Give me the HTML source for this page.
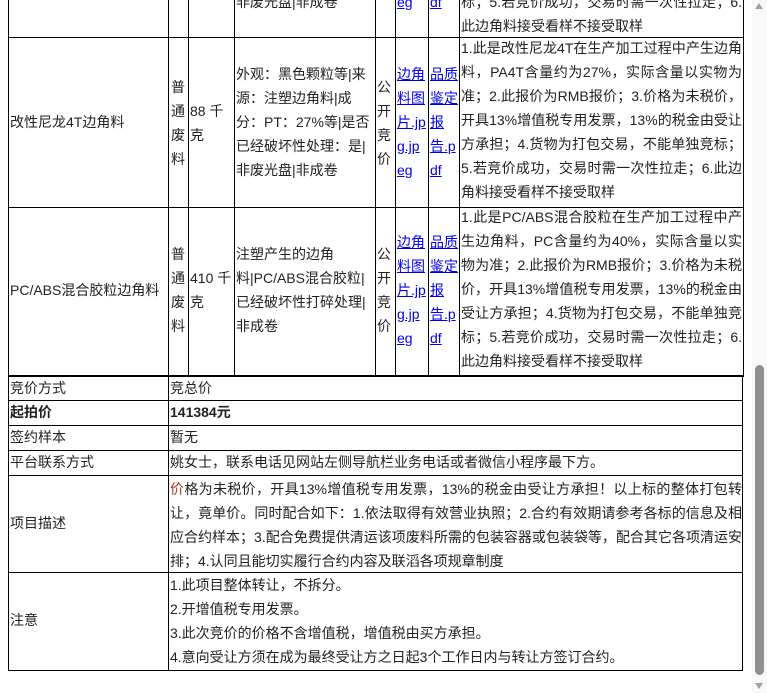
<!DOCTYPE html>
<html><head><meta charset="utf-8"><style>
html,body{margin:0;padding:0;background:#fff;}
body{width:767px;height:693px;position:relative;overflow:hidden;font-family:"Liberation Sans","Noto Sans CJK SC",sans-serif;font-size:14px;color:#222;}
.v{position:absolute;width:1px;background:#000;}
.h{position:absolute;height:1px;background:#000;}
.t{position:absolute;line-height:24px;white-space:nowrap;}
.a{color:#0000ee;text-decoration:underline;}
.blk{position:absolute;line-height:24px;}
.blk span{display:block;white-space:nowrap;}
.blk span.j{text-align:justify;text-align-last:justify;}
</style></head><body>
<!-- upper table verticals -->
<div class="v" style="left:8px;top:0;height:376px"></div>
<div class="v" style="left:168px;top:0;height:376px"></div>
<div class="v" style="left:188px;top:0;height:376px"></div>
<div class="v" style="left:234px;top:0;height:376px"></div>
<div class="v" style="left:375px;top:0;height:376px"></div>
<div class="v" style="left:395px;top:0;height:376px"></div>
<div class="v" style="left:428px;top:0;height:376px"></div>
<div class="v" style="left:459px;top:0;height:376px"></div>
<div class="v" style="left:743px;top:0;height:376px"></div>
<div class="h" style="left:8px;top:37px;width:736px"></div>
<div class="h" style="left:8px;top:207px;width:736px"></div>
<div class="h" style="left:8px;top:375px;width:736px;height:2px"></div>
<!-- lower table -->
<div class="v" style="left:8px;top:376px;height:295px"></div>
<div class="v" style="left:168px;top:376px;height:295px"></div>
<div class="v" style="left:742px;top:376px;height:295px"></div>
<div class="h" style="left:8px;top:400px;width:735px"></div>
<div class="h" style="left:8px;top:425px;width:735px"></div>
<div class="h" style="left:8px;top:450px;width:735px"></div>
<div class="h" style="left:8px;top:475px;width:735px"></div>
<div class="h" style="left:8px;top:572px;width:735px"></div>
<div class="h" style="left:8px;top:670px;width:735px"></div>

<!-- row 1 partial -->
<div class="t" style="left:236px;top:-10px">非废光盘|非成卷</div>
<div class="t a" style="left:397px;top:-10px">eg</div>
<div class="t a" style="left:430px;top:-10px">df</div>
<div class="blk" style="left:461px;top:-10px;width:281px"><span class="j">标；5.若竞价成功，交易时需一次性拉走；6.</span><span>此边角料接受看样不接受取样</span></div>

<!-- row 2 -->
<div class="t" style="left:10px;top:110px">改性尼龙4T边角料</div>
<div class="blk" style="left:171px;top:75px"><span>普</span><span>通</span><span>废</span><span>料</span></div>
<div class="blk" style="left:190px;top:99px"><span>88 千</span><span>克</span></div>
<div class="blk" style="left:236px;top:62px"><span>外观：黑色颗粒等|来</span><span>源：注塑边角料|成</span><span>分：PT：27%等|是否</span><span>已经破坏性处理：是|</span><span>非废光盘|非成卷</span></div>
<div class="blk" style="left:377px;top:75px"><span>公</span><span>开</span><span>竞</span><span>价</span></div>
<div class="blk a" style="left:397px;top:62px"><span>边角</span><span>料图</span><span>片.jp</span><span>g.jp</span><span>eg</span></div>
<div class="blk a" style="left:430px;top:62px"><span>品质</span><span>鉴定</span><span>报</span><span>告.p</span><span>df</span></div>
<div class="blk" style="left:461px;top:36px;width:281px"><span class="j">1.此是改性尼龙4T在生产加工过程中产生边角</span><span class="j">料，PA4T含量约为27%，实际含量以实物为</span><span class="j">准；2.此报价为RMB报价；3.价格为未税价，</span><span class="j">开具13%增值税专用发票，13%的税金由受让</span><span class="j">方承担；4.货物为打包交易，不能单独竞标；</span><span class="j">5.若竞价成功，交易时需一次性拉走；6.此边</span><span>角料接受看样不接受取样</span></div>

<!-- row 3 -->
<div class="t" style="left:10px;top:278px">PC/ABS混合胶粒边角料</div>
<div class="blk" style="left:171px;top:242px"><span>普</span><span>通</span><span>废</span><span>料</span></div>
<div class="blk" style="left:190px;top:266px"><span>410 千</span><span>克</span></div>
<div class="blk" style="left:236px;top:242px"><span>注塑产生的边角</span><span>料|PC/ABS混合胶粒|</span><span>已经破坏性打碎处理|</span><span>非成卷</span></div>
<div class="blk" style="left:377px;top:242px"><span>公</span><span>开</span><span>竞</span><span>价</span></div>
<div class="blk a" style="left:397px;top:230px"><span>边角</span><span>料图</span><span>片.jp</span><span>g.jp</span><span>eg</span></div>
<div class="blk a" style="left:430px;top:230px"><span>品质</span><span>鉴定</span><span>报</span><span>告.p</span><span>df</span></div>
<div class="blk" style="left:461px;top:205px;width:281px"><span class="j">1.此是PC/ABS混合胶粒在生产加工过程中产</span><span class="j">生边角料，PC含量约为40%，实际含量以实</span><span class="j">物为准；2.此报价为RMB报价；3.价格为未税</span><span class="j">价，开具13%增值税专用发票，13%的税金由</span><span class="j">受让方承担；4.货物为打包交易，不能单独竞</span><span class="j">标；5.若竞价成功，交易时需一次性拉走；6.</span><span>此边角料接受看样不接受取样</span></div>

<!-- lower rows -->
<div class="t" style="left:10px;top:376px">竞价方式</div>
<div class="t" style="left:170px;top:376px">竞总价</div>
<div class="t" style="left:10px;top:400px;font-weight:bold">起拍价</div>
<div class="t" style="left:170px;top:400px;font-weight:bold">141384元</div>
<div class="t" style="left:10px;top:425px">签约样本</div>
<div class="t" style="left:170px;top:425px">暂无</div>
<div class="t" style="left:10px;top:450px">平台联系方式</div>
<div class="t" style="left:170px;top:450px">姚女士，联系电话见网站左侧导航栏业务电话或者微信小程序最下方。</div>
<div class="t" style="left:10px;top:511px">项目描述</div>
<div class="blk" style="left:170px;top:477px;width:572px"><span class="j"><span style="display:inline;color:#b03020">价</span>格为未税价，开具13%增值税专用发票，13%的税金由受让方承担！以上标的整体打包转</span><span class="j">让，竟单价。同时配合如下：1.依法取得有效营业执照；2.合约有效期请参考各标的信息及相</span><span class="j">应合约样本；3.配合免费提供清运该项废料所需的包装容器或包装袋等，配合其它各项清运安</span><span>排；4.认同且能切实履行合约内容及联滔各项规章制度</span></div>
<div class="t" style="left:10px;top:608px">注意</div>
<div class="blk" style="left:170px;top:573px"><span>1.此项目整体转让，不拆分。</span><span>2.开增值税专用发票。</span><span>3.此次竞价的价格不含增值税，增值税由买方承担。</span><span>4.意向受让方须在成为最终受让方之日起3个工作日内与转让方签订合约。</span></div>

<!-- scrollbar -->
<div style="position:absolute;left:752px;top:0;width:15px;height:693px;background:#f8f8f8"></div>
<div style="position:absolute;left:755px;top:3px;width:0;height:0;border-left:4px solid transparent;border-right:4px solid transparent;border-bottom:6px solid #a0a0a0"></div>
<div style="position:absolute;left:755px;top:365px;width:9px;height:310px;background:#909090;border-radius:5px"></div>
<div style="position:absolute;left:755px;top:683px;width:0;height:0;border-left:4px solid transparent;border-right:4px solid transparent;border-top:6px solid #a0a0a0"></div>
</body></html>
